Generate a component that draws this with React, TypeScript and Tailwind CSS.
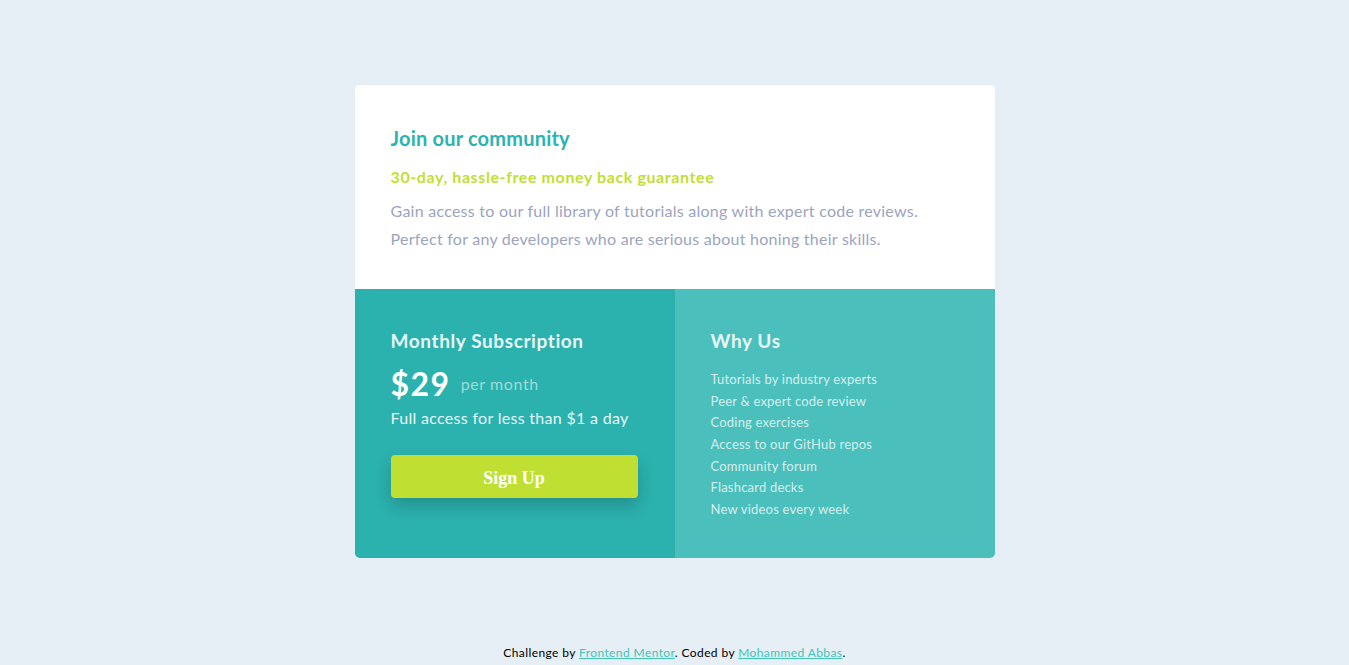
const features = [
  'Tutorials by industry experts',
  'Peer & expert code review',
  'Coding exercises',
  'Access to our GitHub repos',
  'Community forum',
  'Flashcard decks',
  'New videos every week',
]

export default function App() {
  return (
    <div className="flex min-h-screen flex-col items-center bg-[#e6eef6] font-['Lato',sans-serif]">
      <main className="mt-[85px] w-[640px] overflow-hidden rounded-[5px]">
        {/* top */}
        <section className="bg-white px-9 pb-9 pt-[41px]">
          <h1 className="text-[20px] font-bold leading-6 tracking-[0.2px] text-[#2bb3b1]">Join our community</h1>
          <h2 className="mt-[15px] text-[16px] font-bold leading-6 tracking-[0.6px] text-[#c0df34]">
            30-day, hassle-free money back guarantee
          </h2>
          <p className="mt-2 text-[16px] leading-7 tracking-[0.25px] text-[#9ca4be]">
            Gain access to our full library of tutorials along with expert code reviews.
            <br />
            Perfect for any developers who are serious about honing their skills.
          </p>
        </section>

        <div className="grid grid-cols-2">
          {/* subscription */}
          <section className="bg-[#2bb1ae] px-9 pb-[60px] pt-10 text-white">
            <h3 className="text-[19px] font-bold leading-6 tracking-[0.6px] text-[#e8f6f6]">Monthly Subscription</h3>
            <div className="mt-[11px] flex items-center gap-[10px] leading-10">
              <span className="text-[32px] font-bold tracking-[1.5px]">$29</span>
              <span className="text-[16px] tracking-[0.6px] text-[#9fdcd9]">per month</span>
            </div>
            <p className="mt-[2px] text-[16px] leading-6 tracking-[0.3px] text-[#e8f6f6]">
              Full access for less than $1 a day
            </p>
            <button className="mt-[25px] h-[43px] w-[247px] rounded-[4px] bg-[#bfe033] pt-[3px] font-['Liberation_Serif',serif] text-[18px] font-bold text-white shadow-[0_8px_16px_rgba(0,0,0,0.18)]">
              Sign Up
            </button>
          </section>

          {/* why us */}
          <section className="bg-[#4bbfbc] px-9 pt-10 text-[#e0f4f3]">
            <h3 className="text-[19px] font-bold leading-6 tracking-[0.6px] text-[#e8f6f6]">Why Us</h3>
            <ul className="mt-4 text-[13px] leading-[21.67px] tracking-[0.2px] text-[#d4efee]">
              {features.map((f) => (
                <li key={f}>{f}</li>
              ))}
            </ul>
          </section>
        </div>
      </main>

      <footer className="mt-[87px] text-[12px] leading-4 tracking-[0.4px] text-black">
        Challenge by{' '}
        <a href="#" className="text-[#3ec3b4] underline">
          Frontend Mentor
        </a>
        . Coded by{' '}
        <a href="#" className="text-[#3ec3b4] underline">
          Mohammed Abbas
        </a>
        .
      </footer>
    </div>
  )
}
